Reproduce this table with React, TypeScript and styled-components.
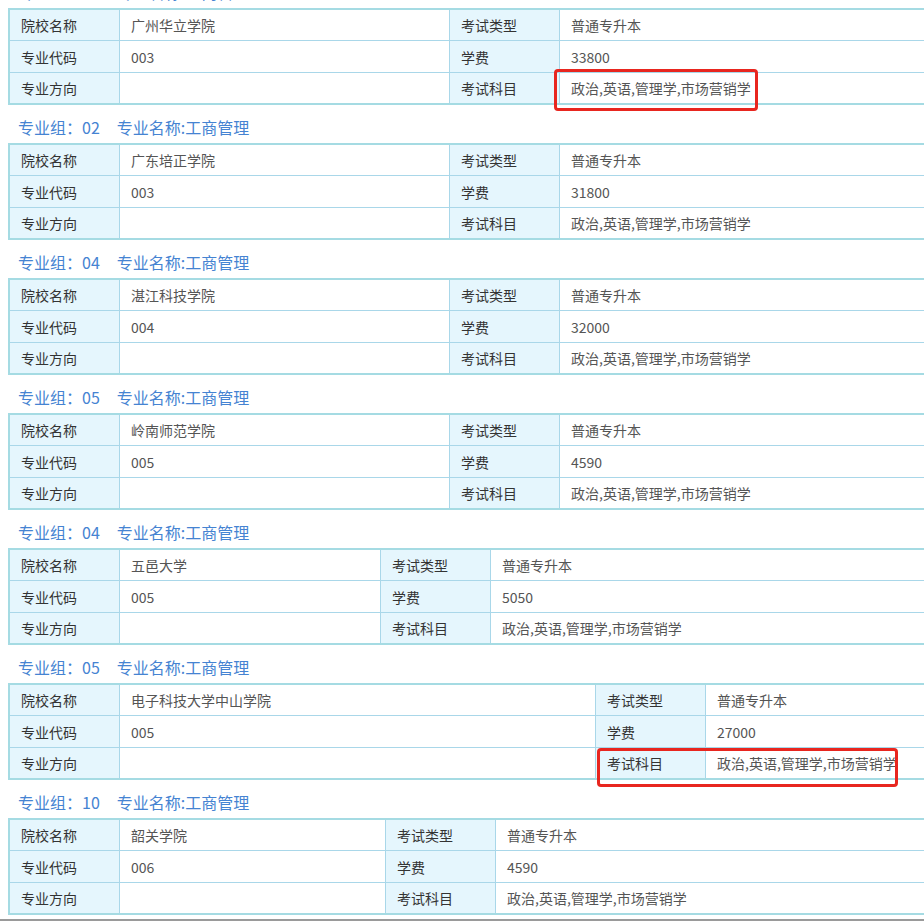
import React from "react";
import styled, { createGlobalStyle } from "styled-components";

const GlobalStyle = createGlobalStyle`
  html, body {
    margin: 0;
    padding: 0;
    overflow: hidden;
    background: #ffffff;
  }
  body {
    font-family: "Noto Sans CJK SC", "Noto Sans", sans-serif;
    font-size: 14px;
    color: #333;
  }
`;

const Page = styled.div`
  position: relative;
  margin-top: -30px;
  padding-left: 8px;
  width: 1200px;
`;

const Block = styled.section`
  display: flex;
  flex-direction: column;
`;

const Title = styled.div`
  padding: 12px 0 6px 10px;
  line-height: 20px;
  height: 20px;
  font-size: 16px;
  color: #4583d2;
  display: flex;
  white-space: nowrap;
`;

const TitleName = styled.span`
  margin-left: 17px;
`;

const Grid = styled.div<{ $mid: number }>`
  display: grid;
  grid-template-columns: 109px ${(p) => p.$mid}px 110px 1fr;
  grid-template-rows: 30px 32px 31px;
  border: 2px solid #a5dbe3;
  width: 1100px;
`;

const Cell = styled.div<{ $label?: boolean; $first?: boolean; $top?: boolean }>`
  box-sizing: border-box;
  display: flex;
  align-items: center;
  padding-left: 11px;
  white-space: nowrap;
  background: ${(p) => (p.$label ? "#e5f6fd" : "#ffffff")};
  color: ${(p) => (p.$label ? "#333333" : "#555555")};
  border-left: ${(p) => (p.$first ? "none" : "1px solid #a9d7e9")};
  border-top: ${(p) => (p.$top ? "none" : "1px solid #a9d7e9")};
`;

const Mark = styled.div`
  position: absolute;
  box-sizing: border-box;
  border: 3px solid #e8261f;
  border-radius: 4px;
  pointer-events: none;
`;

const BottomEdge = styled.div`
  position: fixed;
  left: 0;
  right: 0;
  bottom: 0;
  height: 2px;
  background: #9a9a9a;
`;

type Item = {
  group: string;
  school: string;
  code: string;
  fee: string;
  mid: number;
};

const items: Item[] = [
  { group: "01", school: "广州华立学院", code: "003", fee: "33800", mid: 330 },
  { group: "02", school: "广东培正学院", code: "003", fee: "31800", mid: 330 },
  { group: "04", school: "湛江科技学院", code: "004", fee: "32000", mid: 330 },
  { group: "05", school: "岭南师范学院", code: "005", fee: "4590", mid: 330 },
  { group: "04", school: "五邑大学", code: "005", fee: "5050", mid: 261 },
  { group: "05", school: "电子科技大学中山学院", code: "005", fee: "27000", mid: 476 },
  { group: "10", school: "韶关学院", code: "006", fee: "4590", mid: 266 },
];

const subjects = "政治,英语,管理学,市场营销学";

function MajorTable({ item }: { item: Item }) {
  const rows: [string, string, string, string][] = [
    ["院校名称", item.school, "考试类型", "普通专升本"],
    ["专业代码", item.code, "学费", item.fee],
    ["专业方向", "", "考试科目", subjects],
  ];
  return (
    <Grid $mid={item.mid}>
      {rows.map((r, i) => (
        <React.Fragment key={i}>
          <Cell $label $first $top={i === 0}>{r[0]}</Cell>
          <Cell $top={i === 0}>{r[1]}</Cell>
          <Cell $label $top={i === 0}>{r[2]}</Cell>
          <Cell $top={i === 0}>{r[3]}</Cell>
        </React.Fragment>
      ))}
    </Grid>
  );
}

export default function App() {
  return (
    <>
      <GlobalStyle />
      <Page>
        {items.map((item, i) => (
          <Block key={i}>
            <Title>
              <span>专业组：{item.group}</span>
              <TitleName>专业名称:工商管理</TitleName>
            </Title>
            <MajorTable item={item} />
          </Block>
        ))}
        <Mark style={{ left: 554, top: 99, width: 204, height: 42 }} />
        <Mark style={{ left: 597, top: 778, width: 301, height: 39 }} />
      </Page>
      <BottomEdge />
    </>
  );
}
